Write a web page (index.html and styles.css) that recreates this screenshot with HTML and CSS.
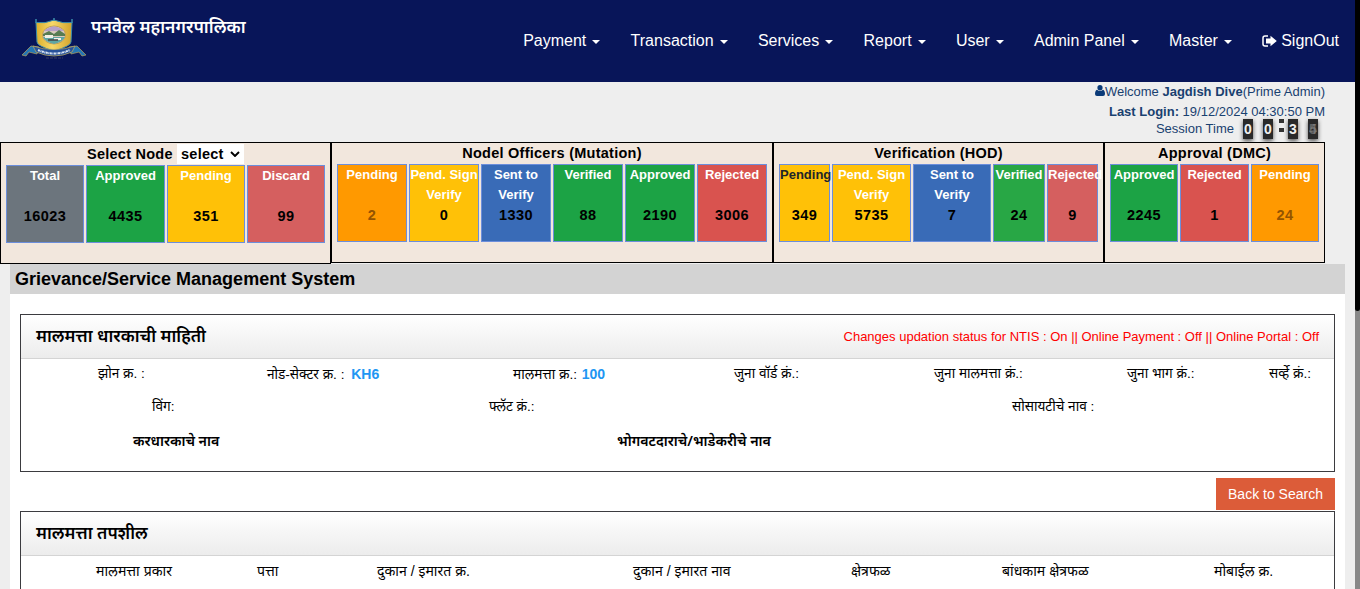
FILE: index.html
```
<!DOCTYPE html>
<html lang="mr">
<head>
<meta charset="utf-8">
<title>पनवेल महानगरपालिका</title>
<link rel="stylesheet" href="styles.css">
</head>
<body>
<div class="scrollbar"><div class="thumb"></div></div>
<div class="page">
  <header class="top">
    <svg class="logo" viewBox="0 0 66 42" width="66" height="42">
      <defs><linearGradient id="gold" x2="1"><stop offset="0" stop-color="#dcae2c"/><stop offset=".45" stop-color="#f7d869"/><stop offset="1" stop-color="#d3a32b"/></linearGradient></defs>
      <path d="M15 4.500Q24 6 33 2Q42 6 51 4.500L50 24Q50 28 33 33Q16 28 16 24Z" fill="url(#gold)" stroke="#3a8cab"/>
      <path d="M15 5V1M33 3V0M51 5V1" stroke="#3a8cab" stroke-width="1.500"/>
      <ellipse cx="33" cy="17" rx="11.500" ry="9" fill="#d8c9bc" stroke="#b58c3c" stroke-width=".7"/>
      <path d="M23 13Q33 4 43 13Z" fill="#b6a0c9"/>
      <path d="M22 16L28 13L33 16L38 12L44 16V18H22Z" fill="#577c52"/>
      <path d="M22 19H44Q42 24 33 26Q24 24 22 19Z" fill="#5fa6a3"/>
      <path d="M24 17H32V20H24ZM33 20H40V22H33Z" fill="#f1f0e6"/>
      <path d="M27 22H37" stroke="#444" stroke-width="1.500"/>
      <path d="M1 37L10 28L18 29L16 36L8 34L5 38ZM65 37L56 28L48 29L50 36L58 34L61 38Z" fill="#2476b5" stroke="#b8a35a" stroke-width=".7"/>
      <path d="M12 28Q33 35 54 28L51 34Q33 42 15 34Z" fill="#28529b" stroke="#c4b15e" stroke-width=".7"/>
      <path d="M17 32Q33 39 49 32" fill="none" stroke="#dce6f2" stroke-width="2" stroke-dasharray="2 .6 1 .5"/>
      <path d="M25 40H42" stroke="#28305c" stroke-width="1.500" stroke-dasharray="3 1"/>
    </svg>
    <div class="brand">पनवेल महानगरपालिका</div>
    <nav class="nav">
      <a>Payment<i class="caret"></i></a><a>Transaction<i class="caret"></i></a><a>Services<i class="caret"></i></a><a>Report<i class="caret"></i></a><a>User<i class="caret"></i></a><a>Admin Panel<i class="caret"></i></a><a>Master<i class="caret"></i></a><a><svg class="signout" width="15" height="12" viewBox="0 0 15 12"><path d="M6 1H3Q1 1 1 3V9Q1 11 3 11H6" fill="none" stroke="#fff" stroke-width="1.500"/><path d="M4 3.500H8.500V.8L14.800 6L8.500 11.200V8.500H4Z" fill="#fff"/></svg>SignOut</a>
    </nav>
  </header>
  <section class="user">
    <div class="welcome"><svg width="10" height="11" viewBox="0 0 10 11"><path d="M5 0a2.600 2.700 0 0 1 2.600 2.700A2.600 2.700 0 0 1 2.400 2.700A2.600 2.700 0 0 1 5 0ZM2 4.800Q5 7.200 8 4.800Q10 5.500 10 9Q10 11 8 11H2Q0 11 0 9Q0 5.500 2 4.800Z" fill="#0a3a78"/></svg>Welcome <b>Jagdish Dive</b>(Prime Admin)</div>
    <div class="login"><b>Last Login:</b> 19/12/2024 04:30:50 PM</div>
    <div class="session"><span>Session Time</span><span class="clock"><i>0</i><i>0</i><em></em><i>3</i><i class="flip"><s>5</s><s>4</s></i></span></div>
  </section>
  <section class="stats">
    <div class="group g1"><h4>Select Node <span class="select">select<svg width="10" height="6" viewBox="0 0 10 6"><path d="M1 1L5 5L9 1" fill="none" stroke="#000" stroke-width="1.900"/></svg></span></h4>
      <div class="tiles"><div class="tile grey"><p>Total</p><b>16023</b></div><div class="tile green"><p>Approved</p><b>4435</b></div><div class="tile yellow"><p>Pending</p><b>351</b></div><div class="tile rose"><p>Discard</p><b>99</b></div></div></div>
    <div class="group g2"><h4>Nodel Officers (Mutation)</h4>
      <div class="tiles"><div class="tile orange"><p>Pending</p><b>2</b></div><div class="tile yellow"><p>Pend. Sign<br>Verify</p><b>0</b></div><div class="tile blue"><p>Sent to<br>Verify</p><b>1330</b></div><div class="tile green"><p>Verified</p><b>88</b></div><div class="tile green"><p>Approved</p><b>2190</b></div><div class="tile red"><p>Rejected</p><b>3006</b></div></div></div>
    <div class="group g3"><h4>Verification (HOD)</h4>
      <div class="tiles"><div class="tile yellow dark"><p>Pending</p><b>349</b></div><div class="tile yellow"><p>Pend. Sign<br>Verify</p><b>5735</b></div><div class="tile blue"><p>Sent to<br>Verify</p><b>7</b></div><div class="tile lime"><p>Verified</p><b>24</b></div><div class="tile rose"><p>Rejected</p><b>9</b></div></div></div>
    <div class="group g4"><h4>Approval (DMC)</h4>
      <div class="tiles"><div class="tile green"><p>Approved</p><b>2245</b></div><div class="tile red"><p>Rejected</p><b>1</b></div><div class="tile orange"><p>Pending</p><b>24</b></div></div></div>
  </section>
  <main class="content">
    <h1>Grievance/Service Management System</h1>
    <section class="card owner">
      <header><h2>मालमत्ता धारकाची माहिती</h2><span class="status">Changes updation status for NTIS : On || Online Payment : Off || Online Portal : Off</span></header>
      <div class="row r1"><span>झोन क्र. :</span><span>नोड-सेक्टर क्र. : <b>KH6</b></span><span>मालमत्ता क्र.: <b>100</b></span><span>जुना वॉर्ड क्रं.:</span><span>जुना मालमत्ता क्रं.:</span><span>जुना भाग क्रं.:</span><span>सर्व्हे क्रं.:</span></div>
      <div class="row r2"><span>विंग:</span><span>फ्लॅट क्रं.:</span><span>सोसायटीचे नाव :</span></div>
      <div class="row r3"><span>करधारकाचे नाव</span><span>भोगवटदाराचे/भाडेकरीचे नाव</span></div>
    </section>
    <div class="actions"><button>Back to Search</button></div>
    <section class="card detail">
      <header><h2>मालमत्ता तपशील</h2></header>
      <div class="row r4"><span>मालमत्ता प्रकार</span><span>पत्ता</span><span>दुकान / इमारत क्र.</span><span>दुकान / इमारत नाव</span><span>क्षेत्रफळ</span><span>बांधकाम क्षेत्रफळ</span><span>मोबाईल क्र.</span></div>
    </section>
  </main>
</div>
</body>
</html>
```
FILE: styles.css
```
* { box-sizing: border-box; }
body { margin: 0; height: 589px; overflow: hidden; background: #eee; color: #000; font-family: "Liberation Sans", "Noto Sans", sans-serif; font-size: 14px; display: flex; flex-direction: row-reverse; }
.scrollbar { width: 5px; height: 589px; background: #888; }
.thumb { height: 311px; background: #000; border-radius: 0 0 3px 3px; }
.page { width: 1355px; }
h1, h2, h4, p { margin: 0; }
.top { height: 82px; background: #081559; color: #fff; display: flex; padding-left: 21px; }
.logo { margin-top: 18px; flex: none; }
.brand { margin: 14px 0 0 4px; font: 600 17.5px/25px "Noto Sans", sans-serif; white-space: nowrap; }
.nav { margin-left: auto; padding-right: 16px; height: 81px; display: flex; align-items: center; gap: 30.3px; font-size: 16px; }
.nav a { display: flex; align-items: center; white-space: nowrap; }
.caret { border: 4px solid transparent; border-top-color: #fff; border-bottom: 0; margin: 3px 0 0 6px; }
.signout { margin-right: 4px; }
.user { height: 60px; padding-right: 30px; display: flex; flex-direction: column; align-items: flex-end; color: #194170; font-size: 13px; }
.welcome { height: 20px; line-height: 19px; }
.login { height: 18px; line-height: 19px; }
.session { height: 20px; display: flex; line-height: 18px; }
.session span { white-space: nowrap; }
.clock { display: flex; margin: -1px 7px 0 9px; height: 19px; }
.clock i { width: 10px; height: 20px; margin-right: 10px; background: #292929; color: #eee; text-align: center; font: bold 14px/20px "Liberation Sans", sans-serif; box-shadow: 0 2px 4px #555; }
.clock i:nth-child(2) { margin-right: 6px; }
.clock em { width: 5px; height: 13px; border-top: 4px solid #333; border-bottom: 4px solid #333; margin-right: 4px; }
.clock .flip { margin-right: 0; display: grid; color: #888; }
.flip s { grid-area: 1 / 1; text-decoration: none; opacity: .6; }
.stats { height: 122px; display: flex; align-items: flex-start; }
.group { background: #f2e7dd; border: 1px solid #000; height: 121px; padding: 0 5px; }
.g1 { width: 331px; height: 122px; }
.g2 { width: 442px; }
.g3 { width: 331px; }
.g4 { width: 221px; }
.group h4 { height: 21px; font-size: 14.5px; line-height: 21px; letter-spacing: .25px; text-align: center; white-space: nowrap; }
.g1 h4 { height: 22px; line-height: 22px; }
.select { display: inline-flex; align-items: center; gap: 6px; width: 67px; height: 20px; padding-left: 4px; background: #fff; vertical-align: top; margin-top: 1px; }
.tiles { display: grid; gap: 2px; height: 78px; }
.g1 .tiles { grid-template-columns: 78px 79px 78px 78px; }
.g2 .tiles { grid-template-columns: repeat(6, 70px); }
.g3 .tiles { grid-template-columns: 51px 79px 78px 52px 51px; }
.g4 .tiles { grid-template-columns: 68px 69px 68px; }
.tile { border: 1px solid #6c8edb; text-align: center; color: #fff; min-width: 0; }
.tile p { height: 40px; font: bold 13px/20px "Liberation Sans", sans-serif; white-space: nowrap; }
.tile b { display: block; color: #000; font-size: 14.5px; line-height: 21px; letter-spacing: .4px; }
.grey { background: #6c757d; }
.green { background: #1ca345; }
.lime { background: #28a745; }
.yellow { background: #ffc107; }
.rose { background: #d55f5f; }
.red { background: #d9534f; }
.blue { background: #396bb7; }
.orange { background: #ff9900; }
.orange b { color: #945400; }
.dark { color: #212529; }
.content { margin: 0 10px; background: #fff; height: 325px; }
.content h1 { height: 30px; background: #d3d3d3; padding-left: 5px; font-size: 18px; line-height: 30px; }
.card { margin: 20px 10px 0; border: 1px solid #3b3b3f; background: #fff; height: 158px; }
.card header { height: 44px; display: flex; align-items: center; justify-content: space-between; padding: 0 15px; background: linear-gradient(#fff, #ececec); border-bottom: 1px solid #d4d4d4; }
.card h2 { font: 600 17.3px/30px "Noto Sans", sans-serif; margin-top: -2px; }
.status { color: #f00; font-size: 13px; }
.row { display: grid; font-size: 13.6px; line-height: 20px; height: 34px; white-space: nowrap; align-items: center; }
.row b { color: #2196f3; font-size: 14px; }
.r1 b { margin-left: 1px; }
.r1 span:nth-child(2) b { margin-left: 3px; }
.r1 { padding-left: 77px; height: 30px; grid-template-columns: 169px 246px 221px 200px 193px 142px 60px; }
.r2 { padding-left: 131px; height: 36px; grid-template-columns: 337px 523px 200px; }
.r3 { padding-left: 112px; height: 32px; grid-template-columns: 484px 300px; font-weight: 600; font-size: 14.2px; }
.r3 span { font-family: "Noto Sans", sans-serif; }
.r4 { padding-left: 75px; height: 30px; grid-template-columns: 161px 120px 256px 218px 151px 212px 90px; font-size: 14.1px; }
.actions { padding: 6px 10px 0; height: 39px; display: flex; justify-content: flex-end; }
.actions button { width: 119px; height: 32px; padding: 0; border: 0; background: #dc5c39; color: #fff; font: 14px "Liberation Sans", sans-serif; }
.detail { margin-top: 0; height: 78px; border-bottom: 0; }
```
